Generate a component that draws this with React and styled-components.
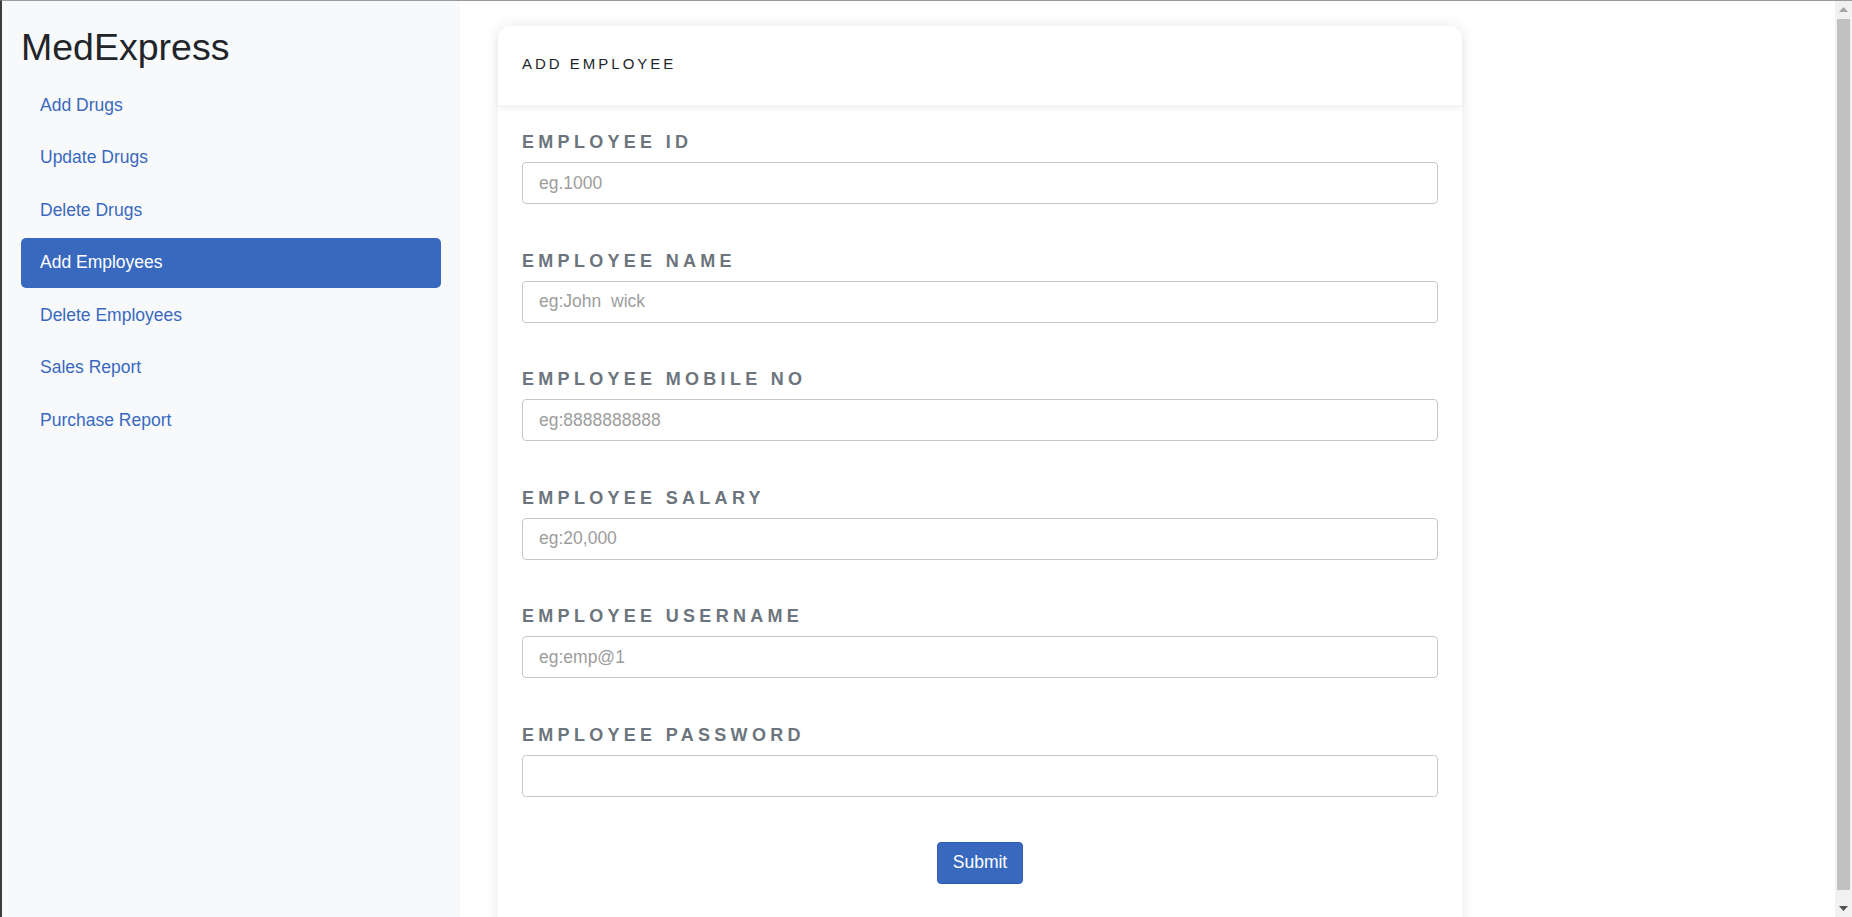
import React from 'react';
import styled, { createGlobalStyle } from 'styled-components';

const GlobalStyle = createGlobalStyle`
	html, body {
		margin: 0;
		padding: 0;
		overflow: hidden;
		background: #fff;
	}

	* {
		box-sizing: border-box;
	}

	body {
		font-family: "Liberation Sans", Arial, sans-serif;
		color: #212529;
	}
`;

// Outer window, thin frame lines on top and left
const Frame = styled.div`
	display: flex;
	height: 917px;
	border-top: 1px solid #9a9a9a;
	border-left: 2px solid #3d3d3d;
	overflow: hidden;
`;

// Left navigation column
const Sidebar = styled.nav`
	width: 458px;
	flex-shrink: 0;
	background: #f8f9fa;
	padding: 24px 19px 0 19px;
	display: flex;
	flex-direction: column;
`;

const Brand = styled.h1`
	margin: 0 0 11px 0;
	font-size: 37.5px;
	line-height: 44px;
	font-weight: 400;
	color: #212529;
`;

const NavList = styled.div`
	display: flex;
	flex-direction: column;
	gap: 2.6px;
`;

const NavLink = styled.a`
	display: flex;
	align-items: center;
	height: 50px;
	padding: 0 19px;
	font-size: 17.5px;
	border-radius: 5px;
	text-decoration: none;
	cursor: pointer;
	color: ${p => (p.$active ? '#fff' : '#3869bf')};
	background: ${p => (p.$active ? '#3869bf' : 'transparent')};
`;

// Main area holding the form card
const Main = styled.main`
	flex: 1;
	padding: 25px 0 0 38px;
`;

const Card = styled.section`
	width: 964px;
	background: #fff;
	border-radius: 12px;
	box-shadow: 0 0 15px rgba(0, 0, 0, 0.09);
`;

const CardHeader = styled.header`
	position: relative;
	z-index: 1;
	height: 79px;
	padding: 0 24px 5px 24px;
	display: flex;
	align-items: center;
	background: #fff;
	border-radius: 12px 12px 0 0;
	box-shadow: 0 4px 7px rgba(0, 0, 0, 0.06);
	font-size: 15px;
	letter-spacing: 3px;
	color: #212529;
`;

const CardBody = styled.form`
	padding: 26px 24px 60px 24px;
	display: flex;
	flex-direction: column;
`;

const Field = styled.div`
	display: flex;
	flex-direction: column;
	margin-bottom: ${p => (p.$last ? '0' : '45.5px')};
`;

const Label = styled.label`
	display: block;
	font-size: 18px;
	line-height: 22px;
	font-weight: 700;
	letter-spacing: 4.3px;
	color: #6c757d;
	margin-bottom: 9px;
`;

const Input = styled.input`
	width: 100%;
	height: 42px;
	padding: 0 16px;
	border: 1px solid #c8c8c8;
	border-radius: 4px;
	font-family: "Liberation Sans", Arial, sans-serif;
	font-size: 17.5px;
	color: #495057;
	background: #fff;
	outline: none;

	&::placeholder {
		color: #9d9d9d;
		opacity: 1;
	}
`;

const SubmitButton = styled.button`
	align-self: center;
	margin-top: 45px;
	height: 42px;
	padding: 0 15px;
	border: 1px solid #2f5ba8;
	border-radius: 4px;
	background: #3869bf;
	color: #fff;
	font-family: "Liberation Sans", Arial, sans-serif;
	font-size: 17.5px;
	cursor: pointer;
`;

// Fake browser scrollbar at the far right
const ScrollTrack = styled.div`
	width: 17px;
	flex-shrink: 0;
	margin-left: auto;
	background: #f1f1f1;
	display: flex;
	flex-direction: column;
`;

const ScrollArrow = styled.div`
	height: 17px;
	display: flex;
	align-items: center;
	justify-content: center;
	flex-shrink: 0;
`;

const ScrollThumb = styled.div`
	flex: 1;
	margin: 1px 2px 10px 2px;
	background: #c1c1c1;
`;

const navItems = [
	'Add Drugs',
	'Update Drugs',
	'Delete Drugs',
	'Add Employees',
	'Delete Employees',
	'Sales Report',
	'Purchase Report',
];

const fields = [
	{ label: 'EMPLOYEE ID', placeholder: 'eg.1000' },
	{ label: 'EMPLOYEE NAME', placeholder: 'eg:John  wick' },
	{ label: 'EMPLOYEE MOBILE NO', placeholder: 'eg:8888888888' },
	{ label: 'EMPLOYEE SALARY', placeholder: 'eg:20,000' },
	{ label: 'EMPLOYEE USERNAME', placeholder: 'eg:emp@1' },
	{ label: 'EMPLOYEE PASSWORD', placeholder: '', type: 'password' },
];

export default function App() {
	return (
		<>
			<GlobalStyle />
			<Frame>
				<Sidebar>
					<Brand>MedExpress</Brand>
					<NavList>
						{navItems.map(item => (
							<NavLink key={item} $active={item === 'Add Employees'}>
								{item}
							</NavLink>
						))}
					</NavList>
				</Sidebar>

				<Main>
					<Card>
						<CardHeader>ADD EMPLOYEE</CardHeader>
						<CardBody onSubmit={e => e.preventDefault()}>
							{fields.map((f, i) => (
								<Field key={f.label} $last={i === fields.length - 1}>
									<Label>{f.label}</Label>
									<Input type={f.type || 'text'} placeholder={f.placeholder} />
								</Field>
							))}
							<SubmitButton type="submit">Submit</SubmitButton>
						</CardBody>
					</Card>
				</Main>

				<ScrollTrack>
					<ScrollArrow>
						<svg width="9" height="5" viewBox="0 0 9 5">
							<path d="M4.5 0 L9 5 L0 5 Z" fill="#a3a3a3" />
						</svg>
					</ScrollArrow>
					<ScrollThumb />
					<ScrollArrow>
						<svg width="9" height="5" viewBox="0 0 9 5">
							<path d="M0 0 L9 0 L4.5 5 Z" fill="#505050" />
						</svg>
					</ScrollArrow>
				</ScrollTrack>
			</Frame>
		</>
	);
}
